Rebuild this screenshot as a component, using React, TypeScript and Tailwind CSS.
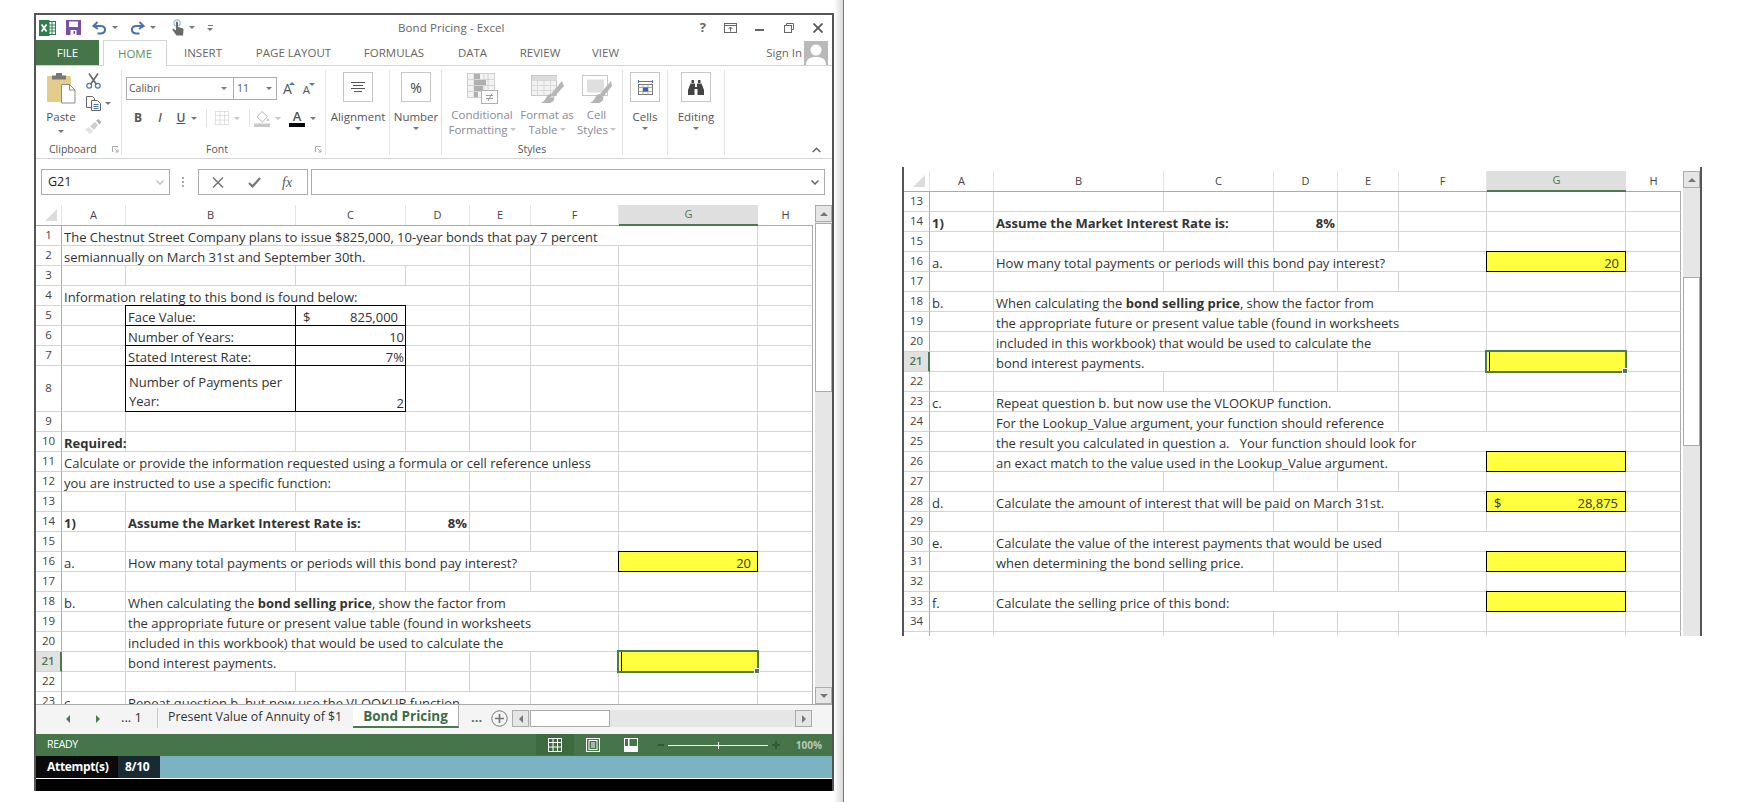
import React from 'react';

// Shared font stacks
const UI_FONT = "font-['Open_Sans',sans-serif]";
const CELL_FONT = "font-['Open_Sans',sans-serif]";

const COLS = 'grid grid-cols-[26px_64px_170px_110px_64px_61px_88px_139px_55px]';
const LETTERS = ['A', 'B', 'C', 'D', 'E', 'F', 'G', 'H'];

const SPAN: Record<number, string> = {
  1: 'col-span-1',
  2: 'col-span-2',
  3: 'col-span-3',
  4: 'col-span-4',
  5: 'col-span-5',
  6: 'col-span-6',
  7: 'col-span-7',
};

interface Cell {
  span?: number;
  text?: React.ReactNode;
  right?: boolean;
  box?: boolean;
  boxTop?: boolean;
  yellow?: boolean;
  selected?: boolean;
  pad?: string;
}

interface Row {
  n: number;
  tall?: boolean;
  cells: Cell[];
}

const e = (n: number): Cell[] => Array.from({ length: n }, () => ({}));

const Money = ({ value }: { value: string }) => (
  <span className="flex w-full justify-between pl-[5px] pr-[7px]">
    <span>$</span>
    <span>{value}</span>
  </span>
);

const ROWS: Row[] = [
  { n: 1, cells: [{ span: 7, text: 'The Chestnut Street Company plans to issue $825,000, 10-year bonds that pay 7 percent' }, {}] },
  { n: 2, cells: [{ span: 4, text: 'semiannually on March 31st and September 30th.' }, ...e(4)] },
  { n: 3, cells: e(8) },
  { n: 4, cells: [{ span: 4, text: 'Information relating to this bond is found below:' }, ...e(4)] },
  { n: 5, cells: [{}, { box: true, boxTop: true, text: 'Face Value:' }, { box: true, boxTop: true, text: <Money value="825,000" /> }, ...e(5)] },
  { n: 6, cells: [{}, { box: true, text: 'Number of Years:' }, { box: true, right: true, text: '10' }, ...e(5)] },
  { n: 7, cells: [{}, { box: true, text: 'Stated Interest Rate:' }, { box: true, right: true, text: '7%' }, ...e(5)] },
  {
    n: 8,
    tall: true,
    cells: [
      {},
      { box: true, text: <span className="block whitespace-normal pl-px leading-[19px]">Number of Payments per Year:</span> },
      { box: true, right: true, text: '2' },
      ...e(5),
    ],
  },
  { n: 9, cells: e(8) },
  { n: 10, cells: [{ text: <b className="font-bold">Required:</b> }, ...e(7)] },
  { n: 11, cells: [{ span: 6, text: 'Calculate or provide the information requested using a formula or cell reference unless' }, ...e(2)] },
  { n: 12, cells: [{ span: 3, text: 'you are instructed to use a specific function:' }, ...e(5)] },
  { n: 13, cells: e(8) },
  {
    n: 14,
    cells: [
      { text: <b className="font-bold">1)</b> },
      { span: 2, text: <b className="font-bold">Assume the Market Interest Rate is:</b> },
      { right: true, pad: 'pr-[2px]', text: <b className="font-bold">8%</b> },
      ...e(4),
    ],
  },
  { n: 15, cells: e(8) },
  {
    n: 16,
    cells: [
      { text: 'a.' },
      { span: 5, text: 'How many total payments or periods will this bond pay interest?' },
      { yellow: true, right: true, pad: 'pr-[6px]', text: '20' },
      {},
    ],
  },
  { n: 17, cells: e(8) },
  {
    n: 18,
    cells: [
      { text: 'b.' },
      { span: 5, text: <>When calculating the <b className="font-bold">bond selling price</b>, show the factor from</> },
      ...e(2),
    ],
  },
  { n: 19, cells: [{}, { span: 5, text: 'the appropriate future or present value table (found in worksheets' }, ...e(2)] },
  { n: 20, cells: [{}, { span: 5, text: 'included in this workbook) that would be used to calculate the' }, ...e(2)] },
  { n: 21, cells: [{}, { span: 2, text: 'bond interest payments.' }, ...e(3), { yellow: true, selected: true }, {}] },
  { n: 22, cells: e(8) },
  { n: 23, cells: [{ text: 'c.' }, { span: 4, text: 'Repeat question b. but now use the VLOOKUP function.' }, ...e(3)] },
  { n: 24, cells: [{}, { span: 4, text: 'For the Lookup_Value argument, your function should reference' }, ...e(3)] },
  { n: 25, cells: [{}, { span: 6, text: 'the result you calculated in question a.   Your function should look for' }, {}] },
  { n: 26, cells: [{}, { span: 5, text: 'an exact match to the value used in the Lookup_Value argument.' }, { yellow: true }, {}] },
  { n: 27, cells: e(8) },
  {
    n: 28,
    cells: [
      { text: 'd.' },
      { span: 5, text: 'Calculate the amount of interest that will be paid on March 31st.' },
      { yellow: true, text: <Money value="28,875" /> },
      {},
    ],
  },
  { n: 29, cells: e(8) },
  { n: 30, cells: [{ text: 'e.' }, { span: 6, text: 'Calculate the value of the interest payments that would be used' }, {}] },
  { n: 31, cells: [{}, { span: 2, text: 'when determining the bond selling price.' }, ...e(3), { yellow: true }, {}] },
  { n: 32, cells: e(8) },
  { n: 33, cells: [{ text: 'f.' }, { span: 5, text: 'Calculate the selling price of this bond:' }, { yellow: true }, {}] },
  { n: 34, cells: e(8) },
  { n: 35, cells: e(8) },
];

const SheetCell = ({ cell }: { cell: Cell }) => {
  let cls = 'border-[#d4d4d4]';
  if (cell.box) {
    cls = cell.boxTop
      ? 'z-10 border-black shadow-[-1px_-1px_0_0_#000,-1px_0_0_0_#000,0_-1px_0_0_#000]'
      : 'z-10 border-black shadow-[-1px_0_0_0_#000]';
  }
  if (cell.yellow) {
    cls = cell.selected
      ? 'bg-[#ffff40] border-[#d4d4d4]'
      : 'z-10 bg-[#ffff40] border-black shadow-[-1px_-1px_0_0_#000,-1px_0_0_0_#000,0_-1px_0_0_#000]';
  }
  return (
    <div
      className={`relative flex items-end whitespace-pre border-b border-r leading-[16px] last:border-r-[#ababab] ${
        SPAN[cell.span ?? 1]
      } ${cls} ${cell.right ? `justify-end ${cell.pad ?? 'pr-[1px]'}` : 'pl-[2px]'}`}
    >
      {cell.text}
      {cell.selected && (
        <div className="absolute -inset-x-[2px] -bottom-[2px] -top-[2px] z-20 border-2 border-[#4a7a4e]">
          <div className="absolute left-[2px] top-0 h-full w-px bg-black" />
          <div className="absolute -bottom-[3px] -right-[3px] h-[6px] w-[6px] border border-white bg-[#4a7a4e]" />
        </div>
      )}
    </div>
  );
};

const ScrollArrow = ({ up }: { up?: boolean }) => (
  <div className="flex h-[17px] w-[17px] shrink-0 items-center justify-center border border-[#ababab] bg-[#e6e6e6]">
    <div className={`h-0 w-0 border-x-[4px] border-x-transparent ${up ? 'border-b-[4px] border-b-[#777]' : 'border-t-[4px] border-t-[#777]'}`} />
  </div>
);

const Sheet = ({ from, to, height, thumb, down }: { from: number; to: number; height: string; thumb: string; down?: boolean }) => (
  <div className={`flex overflow-hidden bg-white text-[13px] text-[#333] ${CELL_FONT} ${height}`}>
    <div className="w-[777px] shrink-0">
      <div className={`${COLS} h-[21px] border-b border-[#ababab] text-[11px] text-[#444]`}>
        <div className="flex items-center justify-end border-r border-[#e4e4e4] pr-[4px]">
          <svg width="12" height="12" viewBox="0 0 12 12">
            <polygon points="12,0 12,12 0,12" fill="#dcdcdc" />
          </svg>
        </div>
        {LETTERS.map((l) =>
          l === 'G' ? (
            <div key={l} className="-mb-px flex items-center justify-center border-b-2 border-[#4a7a4e] bg-[#dfdfdf] pb-px text-[#4a7a4e]">
              {l}
            </div>
          ) : (
            <div key={l} className={`flex items-center justify-center ${l === 'H' ? '' : 'border-r border-[#e4e4e4]'}`}>
              {l}
            </div>
          )
        )}
      </div>
      {ROWS.filter((r) => r.n >= from && r.n <= to).map((r) => (
        <div key={r.n} className={`${COLS} ${r.tall ? 'h-[46px]' : 'h-5'}`}>
          <div
            className={`flex items-center justify-center border-b border-[#d4d4d4] pb-px text-[11.5px] ${
              r.n === 21 ? 'border-r-2 border-r-[#4a7a4e] bg-[#e1e1e1] font-semibold text-[#4a7a4e]' : 'border-r border-r-[#ababab] text-[#444]'
            }`}
          >
            {r.n}
          </div>
          {r.cells.map((c, i) => (
            <SheetCell key={i} cell={c} />
          ))}
        </div>
      ))}
    </div>
    <div className="ml-[2px] flex w-[17px] shrink-0 flex-col bg-[#e6e6e6]">
      <ScrollArrow up />
      <div className={`w-[17px] shrink-0 border border-[#ababab] bg-white ${thumb}`} />
      {down && (
        <div className="mt-auto">
          <ScrollArrow />
        </div>
      )}
    </div>
  </div>
);

const Caret = ({ color = 'border-t-[#777]' }: { color?: string }) => (
  <span className={`inline-block h-0 w-0 border-x-[3px] border-t-[3px] border-x-transparent ${color}`} />
);

const ExcelLogo = () => (
  <svg width="17" height="16" viewBox="0 0 17 16">
    <rect x="7" y="1.5" width="9.5" height="13" fill="#fff" stroke="#2f7d4a" />
    <path d="M10 5h6M10 8h6M10 11h6M13 2v12" stroke="#2f7d4a" />
    <rect x="0" y="0" width="10.5" height="16" fill="#2f7d4a" />
    <path d="M2.6 4.5l5 7M7.6 4.5l-5 7" stroke="#fff" strokeWidth="1.8" />
  </svg>
);

const SaveIcon = () => (
  <svg width="15" height="15" viewBox="0 0 15 15">
    <rect width="15" height="15" fill="#7b4fa6" />
    <rect x="3" y="1.5" width="9" height="5.5" fill="#fff" />
    <rect x="4.5" y="10" width="6" height="5" fill="#fff" />
    <rect x="7.5" y="11" width="1.5" height="3" fill="#7b4fa6" />
  </svg>
);

const UndoIcon = ({ flip }: { flip?: boolean }) => (
  <svg width="15" height="14" viewBox="0 0 15 14" className={flip ? '-scale-x-100' : ''} fill="none" stroke="#4a72b0" strokeWidth="2">
    <path d="M5.5 1L1.5 5l4.5 3" />
    <path d="M2 5h6.5c6 0 6 7 .5 7.5H5.5" />
  </svg>
);

const TouchIcon = () => (
  <svg width="14" height="17" viewBox="0 0 14 17">
    <circle cx="6" cy="4" r="3.2" fill="none" stroke="#a9c0dd" strokeWidth="1.3" />
    <path d="M5 3.5a1 1 0 012 0V8l4.5 1.2c.8.3 1.2 1 1 1.8L12 16.5H5.5L1.5 11c-.5-1 .6-1.8 1.5-1L5 11.5z" fill="#6b6b6b" />
  </svg>
);

const PasteIcon = () => (
  <svg width="29" height="31" viewBox="0 0 29 31">
    <rect x="0" y="3" width="24" height="26" rx="1" fill="#e4cd8b" />
    <rect x="5" y="2.5" width="14" height="4" fill="#777" />
    <rect x="9" y="0" width="6" height="4" fill="#777" />
    <path d="M14.5 11.5h8l5.5 5.5v13h-13.5z" fill="#fff" stroke="#8a8a8a" />
    <path d="M22.5 11.5v5.5h5.5" fill="none" stroke="#8a8a8a" />
  </svg>
);

const ScissorsIcon = () => (
  <svg width="15" height="16" viewBox="0 0 15 16" fill="none">
    <path d="M3 0.5l7.5 11M12 0.5L4.500 11.500" stroke="#666" strokeWidth="1.6" />
    <circle cx="3.200" cy="12.800" r="2.400" stroke="#4f75ad" strokeWidth="1.2" />
    <circle cx="11.800" cy="12.800" r="2.400" stroke="#4f75ad" strokeWidth="1.2" />
  </svg>
);

const CopyIcon = () => (
  <svg width="15" height="15" viewBox="0 0 15 15" fill="#fff" stroke="#666">
    <path d="M.5.5h6l2 2v9H.5z" />
    <path d="M5.500 4.500h6l3 3v7h-9z" />
    <path d="M7.500 8.500h5M7.500 10.500h5M7.500 12.500h5" stroke="#4f75ad" />
  </svg>
);

const PainterIcon = () => (
  <svg width="17" height="15" viewBox="0 0 17 15">
    <path d="M0 10l4-2 4 4-3 3z" fill="#e2e2e2" />
    <path d="M5 7l5-4 3 3-4 5z" fill="#cfcfcf" />
    <path d="M11 1.500l2.500-1.500 3 3-2 2.500z" fill="#b5b5b5" />
  </svg>
);

const BordersIcon = () => (
  <svg width="14" height="14" viewBox="0 0 14 14" fill="none" stroke="#c4c4c4" strokeDasharray="1 1">
    <rect x=".5" y=".5" width="13" height="13" />
    <path d="M.5 4.500h13M.5 9h13M5 .5v13M9.500 .5v13" />
  </svg>
);

const FillIcon = () => (
  <svg width="16" height="17" viewBox="0 0 16 17" fill="none">
    <path d="M3 7l5-5.500 5.500 5-5 5.500z" stroke="#b5b5b5" fill="#fff" />
    <path d="M14 8l1.500 3h-3z" fill="#c8c8c8" />
    <rect x="0" y="13.500" width="16" height="3.500" fill="#c8c8c8" />
  </svg>
);

const AlignIcon = () => (
  <svg width="14" height="11" viewBox="0 0 14 11" stroke="#555">
    <path d="M0 .5h14M2 3.500h10M0 6.500h14M3 9.500h8" />
  </svg>
);

const CondIcon = () => (
  <svg width="31" height="31" viewBox="0 0 31 31" fill="none">
    <rect x=".5" y=".5" width="27" height="24" fill="#f3f3f3" stroke="#cfcfcf" />
    <path d="M7 .5v24M17 .5v24M21 .5v24M.5 6.500h27M.5 12.500h27M.5 18.500h27" stroke="#d4d4d4" />
    <rect x="7" y="1" width="6" height="5" fill="#b0b0b0" />
    <rect x="7" y="7" width="12" height="5" fill="#b0b0b0" />
    <rect x="7" y="13" width="9" height="5" fill="#b0b0b0" />
    <rect x="7" y="19" width="4" height="5" fill="#b0b0b0" />
    <rect x="14.500" y="17.500" width="16" height="13" fill="#fff" stroke="#b0b0b0" />
    <path d="M19 22.500h7M19 25.500h7M25 20.500l-4 7.500" stroke="#999" />
  </svg>
);

const TableIcon = () => (
  <svg width="33" height="31" viewBox="0 0 33 31" fill="none">
    <rect x=".5" y="2.500" width="25" height="20" fill="#f2f2f2" stroke="#c8c8c8" />
    <path d="M.5 7.500h25M.5 12.500h25M.5 17.500h25M6.500 2.500v20M13 2.500v20M19.500 2.500v20" stroke="#d8d8d8" />
    <rect x="1" y="3" width="25" height="4" fill="#dcdcdc" />
    <path d="M31 8L20 21l3 3L33 13z" fill="#b5b5b5" />
    <path d="M20 21c-3 0-4 2-5 4-1 2-3 4-5 5h9c3-1 5-3 4-6z" fill="#b5b5b5" />
    <path d="M19.500 24.500c1-1 2-1 3-.5" stroke="#fff" />
  </svg>
);

const StylesIcon = () => (
  <svg width="30" height="31" viewBox="0 0 30 31" fill="none">
    <rect x=".5" y="2.500" width="25" height="20" fill="#fff" stroke="#c8c8c8" />
    <rect x="5" y="6.500" width="17" height="13" fill="#dfdfdf" />
    <path d="M29 8L18 21l3 3L30 13z" fill="#b5b5b5" />
    <path d="M18 21c-3 0-4 2-5 4-1 2-3 4-5 5h9c3-1 5-3 4-6z" fill="#b5b5b5" />
  </svg>
);

const CellsIcon = () => (
  <svg width="15" height="17" viewBox="0 0 15 17" fill="none">
    <path d="M.5 1v3M14.500 1v3M1 2.500h13" stroke="#4f75ad" />
    <rect x=".5" y="5.500" width="14" height="10" stroke="#777" />
    <path d="M.5 8.500h14M.5 12.500h14M5 5.500v10M10 5.500v10" stroke="#aaa" />
    <rect x="5" y="8.500" width="5" height="4" fill="#3f5fb5" />
  </svg>
);

const BinocularsIcon = () => (
  <svg width="16" height="15" viewBox="0 0 16 15" fill="#444">
    <path d="M3.500 0h2.500v3H3.500zM10 0h2.500v3H10z" />
    <path d="M2.500 3.500h4.500V7H9V3.500h4.500L16 10v5H9.500V9h-3v6H0v-5z" />
  </svg>
);

const ViewGrid = () => (
  <svg width="14" height="14" viewBox="0 0 14 14" fill="none" stroke="#fff">
    <rect x=".5" y=".5" width="13" height="13" />
    <path d="M.5 4.500h13M.5 9h13M5 .5v13M9.500 .5v13" />
  </svg>
);

const ViewPage = () => (
  <svg width="14" height="14" viewBox="0 0 14 14" fill="none" stroke="#fff">
    <rect x=".5" y=".5" width="13" height="13" />
    <rect x="3" y="2.500" width="8" height="9" />
    <path d="M5 5h4M5 7h4M5 9h4" />
  </svg>
);

const ViewBreak = () => (
  <svg width="14" height="14" viewBox="0 0 14 14">
    <rect width="14" height="14" fill="#fff" />
    <rect x="1" y="1" width="3" height="7" fill="#47754a" />
    <rect x="5.500" y="1" width="7.500" height="7" fill="#47754a" />
    <rect x="1" y="10" width="12" height="3" fill="#fff" />
  </svg>
);

const Launcher = () => (
  <svg width="7" height="7" viewBox="0 0 7 7" fill="none" stroke="#aaa">
    <path d="M.5 6V.5H6" />
    <path d="M2.500 2.500L6 6M6 3.500V6H3.500" />
  </svg>
);

const LargeBox = ({ label, children, left }: { label: string; children: React.ReactNode; left: string }) => (
  <div className={`flex w-[30px] flex-col items-center pt-[2px] ${left}`}>
    <div className="flex h-[30px] w-[30px] shrink-0 items-center justify-center border border-[#c6c6c6]">{children}</div>
    <div className="mt-[7px] whitespace-nowrap text-[11.5px] leading-[15px] text-[#555]">{label}</div>
    <div className="mt-[2px] flex h-[5px] items-center">
      <Caret />
    </div>
  </div>
);

const StyleButton = ({ line1, line2, icon, width }: { line1: string; line2: string; icon: React.ReactNode; width: string }) => (
  <div className={`flex flex-col items-center pt-[3px] ${width}`}>
    <div className="flex h-[31px] items-center">{icon}</div>
    <div className="mt-[3px] text-center text-[11.5px] leading-[15px] text-[#8a8a9a]">
      <div className="whitespace-nowrap">{line1}</div>
      <div className="flex items-center justify-center gap-[2px] whitespace-nowrap">
        {line2}
        <Caret color="border-t-[#c4c4c4]" />
      </div>
    </div>
  </div>
);

const TitleBar = () => (
  <div className="flex h-[25px] items-center text-[#666]">
    <div className="ml-[3px] flex items-center">
      <ExcelLogo />
      <div className="ml-[10px]">
        <SaveIcon />
      </div>
      <div className="ml-[11px] flex items-center gap-[5px]">
        <UndoIcon />
        <Caret />
      </div>
      <div className="ml-[12px] flex items-center gap-[5px]">
        <UndoIcon flip />
        <Caret />
      </div>
      <div className="ml-[15px] flex items-center gap-[4px]">
        <TouchIcon />
        <Caret />
      </div>
      <div className="ml-[12px] flex flex-col items-center gap-[2px]">
        <div className="h-px w-[5px] bg-[#777]" />
        <Caret />
      </div>
    </div>
    <div className="ml-[185px] text-[11.5px] tracking-[0.1px] text-[#666]">Bond Pricing - Excel</div>
    <div className="ml-auto flex items-center pr-[9px]">
      <span className="text-[13px] font-bold text-[#666]">?</span>
      <svg className="ml-[18px]" width="13" height="10" viewBox="0 0 13 10" fill="none" stroke="#666">
        <rect x=".5" y=".5" width="12" height="9" />
        <path d="M1 2.500h11M6.500 8.500V4M4.500 6l2-2 2 2" />
      </svg>
      <div className="ml-[18px] mt-[4px] h-[2px] w-[9px] bg-[#666]" />
      <svg className="ml-[20px]" width="10" height="10" viewBox="0 0 10 10" fill="none" stroke="#666">
        <path d="M2.500 2.500V.5h7v6h-2" />
        <rect x=".5" y="2.500" width="7" height="7" />
      </svg>
      <svg className="ml-[19px]" width="10" height="10" viewBox="0 0 10 10" stroke="#555" strokeWidth="1.8">
        <path d="M.5.5l9 9M9.500.5l-9 9" />
      </svg>
    </div>
  </div>
);

const TabStrip = () => (
  <div className="flex h-[26px] border-b border-[#d4d4d4] text-[11.5px] text-[#666]">
    <div className="flex h-[25px] w-[63px] items-center justify-center bg-[#47754a] text-white">FILE</div>
    <div className="relative z-10 ml-[4px] flex h-[26px] w-[64px] items-center justify-center border-x border-t border-[#d4d4d4] bg-white text-[#5d8f6c]">
      HOME
    </div>
    <div className="flex w-[72px] items-center justify-center">INSERT</div>
    <div className="flex w-[109px] items-center justify-center">PAGE LAYOUT</div>
    <div className="flex w-[92px] items-center justify-center">FORMULAS</div>
    <div className="flex w-[65px] items-center justify-center">DATA</div>
    <div className="flex w-[70px] items-center justify-center">REVIEW</div>
    <div className="flex w-[61px] items-center justify-center">VIEW</div>
    <div className="ml-auto flex items-center pr-[4px]">
      <span className="mr-[2px]">Sign In</span>
      <svg width="24" height="24" viewBox="0 0 24 24">
        <rect width="24" height="24" fill="#b9b9b9" />
        <circle cx="12" cy="9" r="5.500" fill="#fff" />
        <path d="M2 24c0-6 4-8 10-8s10 2 10 8z" fill="#fff" />
      </svg>
    </div>
  </div>
);

const Ribbon = () => (
  <div className="flex h-[93px] border-b border-[#d4d4d4] pt-[4px] text-[#555]">
    {/* Clipboard */}
    <div className="flex h-[85px] w-[86px] flex-col border-r border-[#e3e3e3]">
      <div className="flex">
        <div className="ml-[11px] flex w-[28px] flex-col items-center pt-[3px]">
          <PasteIcon />
          <div className="mt-[5px] text-[11.5px] leading-[15px]">Paste</div>
          <div className="mt-[5px] flex h-[5px] items-center">
            <Caret />
          </div>
        </div>
        <div className="ml-[11px] flex flex-col pt-[3px]">
          <ScissorsIcon />
          <div className="mt-[7px] flex items-center gap-[4px]">
            <CopyIcon />
            <Caret />
          </div>
          <div className="-ml-px mt-[8px]">
            <PainterIcon />
          </div>
        </div>
      </div>
      <div className="mt-auto flex h-[12px] items-center justify-between pl-[12px] pr-[2px] text-[10.500px] leading-[12px]">
        <span className="pl-[1px]">Clipboard</span>
        <Launcher />
      </div>
    </div>
    {/* Font */}
    <div className="flex h-[85px] w-[204px] flex-col border-r border-[#e3e3e3]">
      <div className="mt-[7px] flex items-center pl-[4px]">
        <div className="flex h-[23px] w-[108px] items-center justify-between border border-[#ababab] pl-[2px] pr-[6px] text-[10.500px]">
          Calibri
          <Caret />
        </div>
        <div className="flex h-[23px] w-[43px] items-center justify-between border border-l-0 border-[#ababab] pl-[3px] pr-[4px] text-[10.500px]">
          11
          <Caret />
        </div>
        <div className="relative ml-[6px] text-[14px] leading-none">
          A
          <span className="absolute -right-[3px] top-0 h-0 w-0 border-x-[3px] border-b-[3px] border-x-transparent border-b-[#4f75ad]" />
        </div>
        <div className="relative ml-[11px] mt-[2px] text-[11.5px] leading-none">
          A
          <span className="absolute -right-[5px] -top-[1px] h-0 w-0 border-x-[3px] border-t-[3px] border-x-transparent border-t-[#4f75ad]" />
        </div>
      </div>
      <div className="mt-[8px] flex h-[20px] items-center pl-[5px] text-[#555]">
        <b className="w-[22px] text-center text-[12px]">B</b>
        <i className="w-[22px] text-center text-[12px] font-semibold">I</i>
        <span className="w-[20px] text-center text-[12px] font-semibold underline">U</span>
        <Caret />
        <div className="ml-[9px] h-[18px] w-px bg-[#e3e3e3]" />
        <div className="ml-[8px]">
          <BordersIcon />
        </div>
        <div className="ml-[5px] flex">
          <Caret color="border-t-[#c4c4c4]" />
        </div>
        <div className="ml-[9px] h-[18px] w-px bg-[#e3e3e3]" />
        <div className="ml-[4px]">
          <FillIcon />
        </div>
        <div className="ml-[5px] flex">
          <Caret color="border-t-[#c4c4c4]" />
        </div>
        <div className="ml-[8px] flex w-[16px] flex-col items-center">
          <span className="text-[13px] font-semibold leading-[12px]">A</span>
          <div className="mt-[1px] h-[4px] w-[16px] bg-black" />
        </div>
        <div className="ml-[5px] flex">
          <Caret />
        </div>
      </div>
      <div className="mt-auto flex h-[12px] items-center pr-[3px] text-[10.500px] leading-[12px]">
        <span className="ml-[84px]">Font</span>
        <span className="ml-auto">
          <Launcher />
        </span>
      </div>
    </div>
    {/* Alignment */}
    <div className="h-[85px] w-[64px] border-r border-[#e3e3e3]">
      <LargeBox label="Alignment" left="ml-[17px]">
        <AlignIcon />
      </LargeBox>
    </div>
    {/* Number */}
    <div className="h-[85px] w-[52px] border-r border-[#e3e3e3]">
      <LargeBox label="Number" left="ml-[11px]">
        <span className="text-[14px] text-[#444]">%</span>
      </LargeBox>
    </div>
    {/* Styles */}
    <div className="flex h-[85px] w-[181px] flex-col border-r border-[#e3e3e3]">
      <div className="flex">
        <StyleButton line1="Conditional" line2="Formatting" icon={<CondIcon />} width="w-[80px]" />
        <StyleButton line1="Format as" line2="Table" icon={<TableIcon />} width="w-[50px]" />
        <StyleButton line1="Cell" line2="Styles" icon={<StylesIcon />} width="w-[49px]" />
      </div>
      <div className="mt-auto h-[12px] text-center text-[10.500px] leading-[12px] text-[#555]">Styles</div>
    </div>
    {/* Cells */}
    <div className="h-[85px] w-[45px] border-r border-[#e3e3e3]">
      <LargeBox label="Cells" left="ml-[7px]">
        <CellsIcon />
      </LargeBox>
    </div>
    {/* Editing */}
    <div className="h-[85px] w-[57px] border-r border-[#e3e3e3]">
      <LargeBox label="Editing" left="ml-[13px]">
        <BinocularsIcon />
      </LargeBox>
    </div>
    <div className="flex h-[85px] flex-1 items-end justify-end pb-[2px] pr-[11px]">
      <svg width="9" height="6" viewBox="0 0 9 6" fill="none" stroke="#666" strokeWidth="1.5">
        <path d="M.7 5l3.800-3.800L8.300 5" />
      </svg>
    </div>
  </div>
);

const FormulaBar = () => (
  <div className="flex h-[46px] items-start pl-[5px] pt-[10px] text-[#555]">
    <div className="flex h-[26px] w-[129px] items-center justify-between border border-[#ababab] pl-[6px] pr-[5px] text-[12.500px] text-[#222]">
      G21
      <svg width="8" height="5" viewBox="0 0 8 5" fill="none" stroke="#bbb" strokeWidth="1.300">
        <path d="M.5.5L4 4 7.500.5" />
      </svg>
    </div>
    <div className="ml-[12px] mt-[8px] flex flex-col gap-[2px]">
      <div className="h-[2px] w-[2px] bg-[#aaa]" />
      <div className="h-[2px] w-[2px] bg-[#aaa]" />
      <div className="h-[2px] w-[2px] bg-[#aaa]" />
    </div>
    <div className="ml-[14px] flex h-[26px] w-[110px] items-center border border-[#ababab]">
      <svg className="ml-[13px]" width="12" height="11" viewBox="0 0 12 11" stroke="#777" strokeWidth="1.500">
        <path d="M1 .5l10 10M11 .5l-10 10" />
      </svg>
      <svg className="ml-[24px]" width="13" height="11" viewBox="0 0 13 11" fill="none" stroke="#777" strokeWidth="2.200">
        <path d="M1 6l3.500 3.500L12 1" />
      </svg>
      <span className="ml-[21px] font-['Liberation_Serif',serif] text-[14px] italic text-[#555]">fx</span>
    </div>
    <div className="ml-[3px] flex h-[26px] w-[514px] items-center justify-end border border-[#ababab] pr-[5px]">
      <svg width="8" height="5" viewBox="0 0 8 5" fill="none" stroke="#666" strokeWidth="1.500">
        <path d="M.5.5L4 4 7.500.5" />
      </svg>
    </div>
  </div>
);

const SheetTabs = () => (
  <div className="relative z-30 flex h-[30px] items-start border-t border-[#ababab] bg-[#f4f4f4] text-[#333]">
    <div className="ml-[30px] mt-[10px] h-0 w-0 border-y-[4px] border-r-[4px] border-y-transparent border-r-[#4a7a4e]" />
    <div className="ml-[26px] mt-[10px] h-0 w-0 border-y-[4px] border-l-[4px] border-y-transparent border-l-[#4a7a4e]" />
    <span className="ml-[21px] mt-[3px] w-[25px] whitespace-nowrap text-[13px] leading-[18px]">... 1</span>
    <div className="ml-[11px] mt-[3px] h-[20px] w-px bg-[#c8c8c8]" />
    <span className="ml-[10px] mt-[3px] w-[174px] whitespace-nowrap text-[12.4px] leading-[18px]">Present Value of Annuity of $1</span>
    <div className="ml-[11px] flex h-[23px] w-[106px] items-start justify-center border-b-2 border-r border-[#ababab] border-b-[#4a7a4e] bg-white pt-[3px] text-[13.500px] font-bold leading-[17px] text-[#3d6e45]">
      Bond Pricing
    </div>
    <span className="ml-[12px] mt-[3px] w-[14px] text-[13px] font-bold leading-[18px] text-[#4a7a4e]">...</span>
    <svg className="ml-[6px] mt-[5px]" width="17" height="17" viewBox="0 0 17 17" fill="none" stroke="#777">
      <circle cx="8.500" cy="8.500" r="7.700" />
      <path d="M8.500 4v9M4 8.500h9" strokeWidth="1.700" />
    </svg>
    <div className="ml-[4px] mt-[5px] flex h-[17px] w-[300px] bg-[#e6e6e6]">
      <div className="flex h-[17px] w-[17px] items-center justify-center border border-[#ababab]">
        <div className="h-0 w-0 border-y-[4px] border-r-[4px] border-y-transparent border-r-[#777]" />
      </div>
      <div className="ml-px h-[17px] w-[80px] border border-[#ababab] bg-white" />
      <div className="ml-auto flex h-[17px] w-[17px] items-center justify-center border border-[#ababab]">
        <div className="h-0 w-0 border-y-[4px] border-l-[4px] border-y-transparent border-l-[#777]" />
      </div>
    </div>
  </div>
);

const StatusBar = () => (
  <div className="flex h-[22px] items-center bg-[#47754a] text-white">
    <span className="ml-[11px] text-[10.500px] tracking-[-0.3px]">READY</span>
    <div className="ml-auto flex h-[21px] w-[38px] items-center justify-center self-start bg-[#3d6a3f]">
      <ViewGrid />
    </div>
    <div className="ml-[12px]">
      <ViewPage />
    </div>
    <div className="ml-[24px]">
      <ViewBreak />
    </div>
    <div className="ml-[20px] h-[2px] w-[6px] bg-[#2f5b33]" />
    <div className="relative ml-[4px] h-px w-[100px] bg-white">
      <div className="absolute left-1/2 -top-[3px] h-[7px] w-px bg-white" />
    </div>
    <svg className="ml-[4px]" width="8" height="8" viewBox="0 0 8 8" stroke="#2f5b33" strokeWidth="2">
      <path d="M0 4h8M4 0v8" />
    </svg>
    <span className="ml-[16px] mr-[10px] text-[10px] font-bold text-[#b5c9b7]">100%</span>
  </div>
);

const App = () => (
  <div className={`flex h-[802px] w-[1746px] overflow-hidden bg-white ${UI_FONT}`}>
    {/* Left screenshot pane */}
    <div className="flex h-[802px] w-[844px] shrink-0 border-r border-[#777]">
      <div className="ml-[34px] mt-[13px] h-[778px] w-[800px] shrink-0 border-x-2 border-t-2 border-[#555]">
        <TitleBar />
        <TabStrip />
        <Ribbon />
        <FormulaBar />
        <Sheet from={1} to={23} height="h-[499px]" thumb="mt-px h-[169px]" down />
        <SheetTabs />
        <StatusBar />
        <div className="flex h-[22px] bg-[#7ab3c1] text-[12px] font-bold leading-[22px] tracking-[-0.3px] text-white">
          <div className="w-[82px] whitespace-nowrap bg-[#0a0a0a] pl-[11px]">Attempt(s)</div>
          <div className="w-[42px] bg-[#1a2a33] pl-[7px]">8/10</div>
        </div>
        <div className="mt-px h-[12px] bg-black" />
      </div>
      <div className="flex-1 bg-gradient-to-r from-white to-[#d8d8d8]" />
    </div>
    {/* Right screenshot pane */}
    <div className="ml-[58px] mt-[167px] h-[469px] w-[800px] shrink-0 border-x-2 border-[#555] pt-[4px]">
      <Sheet from={13} to={35} height="h-[465px]" thumb="mt-[89px] h-[169px]" />
    </div>
  </div>
);

export default App;
